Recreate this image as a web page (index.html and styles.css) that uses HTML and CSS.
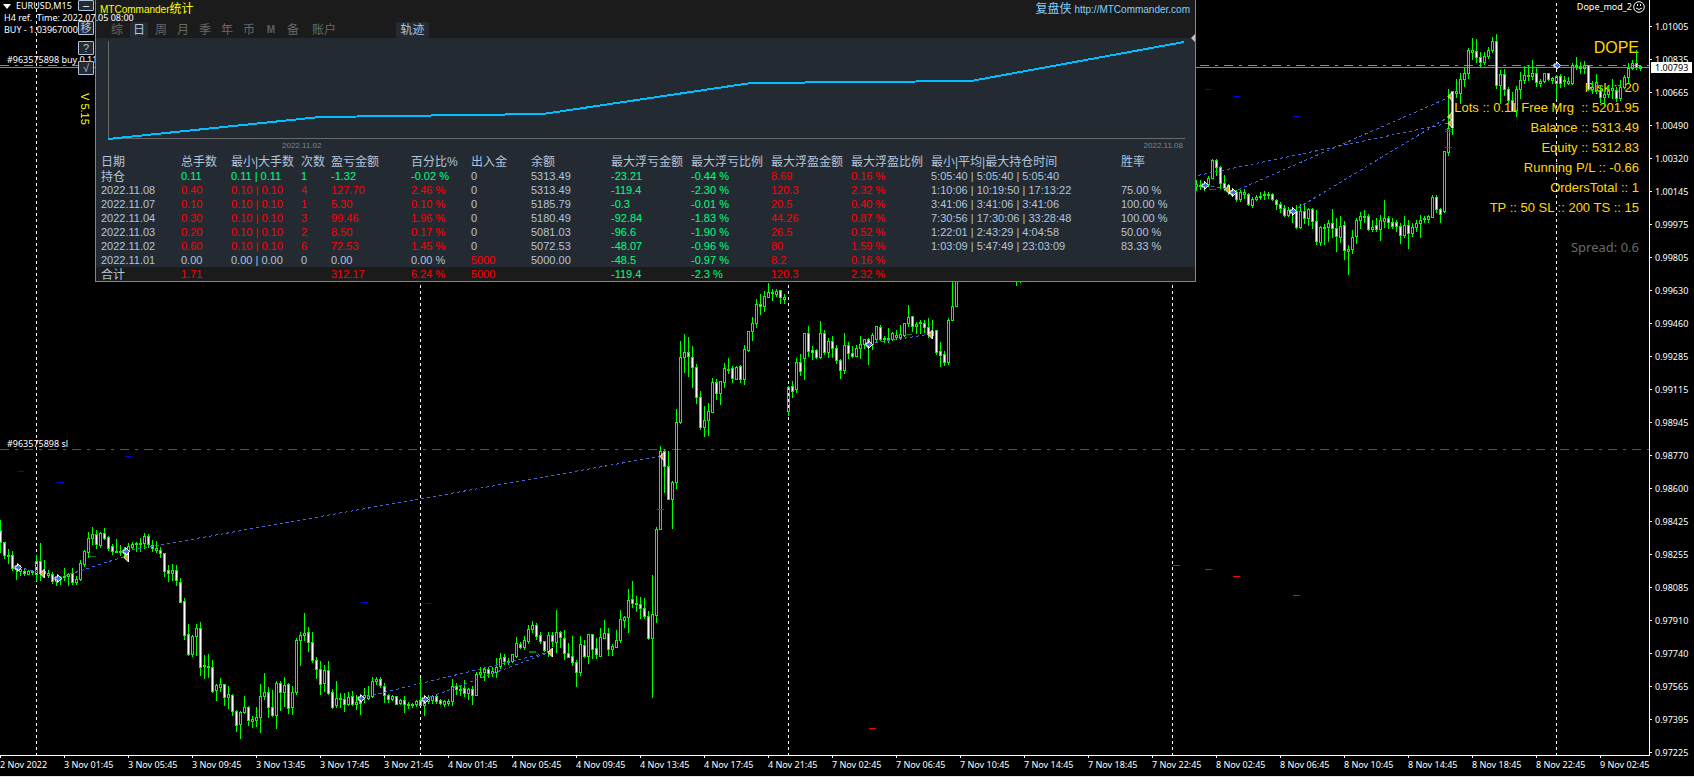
FILE: index.html
```html
<!DOCTYPE html>
<html lang="zh-CN">
<head>
<meta charset="utf-8">
<title>EURUSD,M15</title>
<link rel="stylesheet" href="styles.css">
</head>
<body>
<main class="terminal">
  <section class="plot">
    <div class="hud">
      <p class="expert">Dope_mod_2
        <svg class="smiley" width="12" height="12" viewBox="0 0 12 12" fill="none" stroke="#fff"><circle cx="6" cy="6" r="5.300"/><path d="M3 7q3 3 6 0M4.500 3v2M7.500 3v2"/></svg>
      </p>
      <h1 class="hud-title">DOPE</h1>
      <ul class="hud-list">
        <li>Risk :: 20</li>
        <li>Lots :: 0.11 Free Mrg &nbsp;:: 5201.95</li>
        <li>Balance :: 5313.49</li>
        <li>Equity :: 5312.83</li>
        <li>Running P/L :: -0.66</li>
        <li>OrdersTotal :: 1</li>
        <li>TP :: 50 SL :: 200 TS :: 15</li>
      </ul>
      <p class="spread">Spread: 0.6</p>
    </div>

    <svg class="chart" id="chart" shape-rendering="crispEdges">
      <g id="separators" stroke="#fff" stroke-dasharray="3 3"></g>
      <line x1="0" x2="100%" y1="65.500" y2="65.500" stroke="#32cd32" stroke-dasharray="9 6 3 6"/>
      <line x1="0" x2="100%" y1="449.500" y2="449.500" stroke="#f01010" stroke-dasharray="9 6 3 6"/>
      <line x1="0" x2="100%" y1="67.500" y2="67.500" stroke="#778899"/>
      <path id="bars" fill="#00ff00" fill-rule="evenodd"/>
      <path id="solid" fill="#fff"/>
      <g id="levels"></g>
      <g id="trades" stroke="#4169e1" stroke-dasharray="3 3"></g>
      <g id="markers" shape-rendering="auto"></g>
    </svg>

    <p class="order order-open">#963575898 buy 0.11</p>
    <p class="order order-stop">#963575898 sl</p>

    <div class="tools">
      <button class="tool tool-min" type="button" aria-label="最小化">–</button>
      <button class="tool" type="button">移</button>
      <button class="tool" type="button">?</button>
      <button class="tool" type="button">√</button>
      <span class="version">V 5.15</span>
    </div>

    <section class="panel">
      <header class="panel-head">
        <div class="title-row">
          <h2 class="title">MTCommander<span class="cjk">统计</span></h2>
          <a class="site" href="http://MTCommander.com"><span class="cjk">复盘侠</span> http://MTCommander.com</a>
        </div>
        <nav class="tabs">
          <button class="tab" type="button">综</button>
          <button class="tab active" type="button">日</button>
          <button class="tab" type="button">周</button>
          <button class="tab" type="button">月</button>
          <button class="tab" type="button">季</button>
          <button class="tab" type="button">年</button>
          <button class="tab" type="button">币</button>
          <button class="tab tab-m" type="button">M</button>
          <button class="tab" type="button">备</button>
          <button class="tab tab-wide" type="button">账户</button>
          <button class="tab tab-track active" type="button">轨迹</button>
        </nav>
      </header>
      <svg class="equity" viewBox="0 0 1077 102" preserveAspectRatio="none" fill="none">
        <path d="M.5 3V100.500H1077" stroke="#696969" vector-effect="non-scaling-stroke" shape-rendering="crispEdges"/>
        <path d="M0 101L212 79L435 76L643 45L863 43L1076 4" stroke="#00bfff" stroke-width="2" vector-effect="non-scaling-stroke" shape-rendering="crispEdges"/>
      </svg>
      <div class="dates"><span>2022.11.02</span><span>2022.11.08</span></div>
      <table class="stats">
        <colgroup>
          <col class="c80"><col class="c50"><col class="c70"><col class="c30"><col class="c80"><col class="c60"><col class="c60"><col class="c80"><col class="c80"><col class="c80"><col class="c80"><col class="c80"><col class="c190"><col>
        </colgroup>
        <thead>
          <tr><th>日期</th><th>总手数</th><th>最小|大手数</th><th>次数</th><th>盈亏金额</th><th>百分比%</th><th>出入金</th><th>余额</th><th>最大浮亏金额</th><th>最大浮亏比例</th><th>最大浮盈金额</th><th>最大浮盈比例</th><th>最小|平均|最大持仓时间</th><th>胜率</th></tr>
        </thead>
        <tbody>
          <tr class="g"><td class="n cjk">持仓</td><td>0.11</td><td>0.11 | 0.11</td><td>1</td><td>-1.32</td><td>-0.02 %</td><td class="n">0</td><td class="n">5313.49</td><td>-23.21</td><td>-0.44 %</td><td class="r">8.69</td><td class="r">0.16 %</td><td class="n">5:05:40 | 5:05:40 | 5:05:40</td><td></td></tr>
          <tr class="r"><td class="n">2022.11.08</td><td>0.40</td><td>0.10 | 0.10</td><td>4</td><td>127.70</td><td>2.46 %</td><td class="n">0</td><td class="n">5313.49</td><td class="g">-119.4</td><td class="g">-2.30 %</td><td>120.3</td><td>2.32 %</td><td class="n">1:10:06 | 10:19:50 | 17:13:22</td><td class="n">75.00 %</td></tr>
          <tr class="r"><td class="n">2022.11.07</td><td>0.10</td><td>0.10 | 0.10</td><td>1</td><td>5.30</td><td>0.10 %</td><td class="n">0</td><td class="n">5185.79</td><td class="g">-0.3</td><td class="g">-0.01 %</td><td>20.5</td><td>0.40 %</td><td class="n">3:41:06 | 3:41:06 | 3:41:06</td><td class="n">100.00 %</td></tr>
          <tr class="r"><td class="n">2022.11.04</td><td>0.30</td><td>0.10 | 0.10</td><td>3</td><td>99.46</td><td>1.96 %</td><td class="n">0</td><td class="n">5180.49</td><td class="g">-92.84</td><td class="g">-1.83 %</td><td>44.26</td><td>0.87 %</td><td class="n">7:30:56 | 17:30:06 | 33:28:48</td><td class="n">100.00 %</td></tr>
          <tr class="r"><td class="n">2022.11.03</td><td>0.20</td><td>0.10 | 0.10</td><td>2</td><td>8.50</td><td>0.17 %</td><td class="n">0</td><td class="n">5081.03</td><td class="g">-96.6</td><td class="g">-1.90 %</td><td>26.5</td><td>0.52 %</td><td class="n">1:22:01 | 2:43:29 | 4:04:58</td><td class="n">50.00 %</td></tr>
          <tr class="r"><td class="n">2022.11.02</td><td>0.60</td><td>0.10 | 0.10</td><td>6</td><td>72.53</td><td>1.45 %</td><td class="n">0</td><td class="n">5072.53</td><td class="g">-48.07</td><td class="g">-0.96 %</td><td>80</td><td>1.59 %</td><td class="n">1:03:09 | 5:47:49 | 23:03:09</td><td class="n">83.33 %</td></tr>
          <tr class="n"><td>2022.11.01</td><td>0.00</td><td>0.00 | 0.00</td><td>0</td><td>0.00</td><td>0.00 %</td><td class="r">5000</td><td>5000.00</td><td class="g">-48.5</td><td class="g">-0.97 %</td><td class="r">8.2</td><td class="r">0.16 %</td><td></td><td></td></tr>
        </tbody>
        <tfoot>
          <tr class="r"><td class="n cjk">合计</td><td>1.71</td><td></td><td></td><td>312.17</td><td>6.24 %</td><td>5000</td><td></td><td class="g">-119.4</td><td class="g">-2.3 %</td><td>120.3</td><td>2.32 %</td><td></td><td></td></tr>
        </tfoot>
      </table>
      <svg class="grip" width="4" height="8" viewBox="0 0 4 8"><path d="M4 0V8L0 4Z" fill="#c0c0c0"/></svg>
    </section>

    <div class="symbol">
      <p class="pair"><svg width="8" height="5" viewBox="0 0 8 5"><path d="M0 0H8L4 5Z" fill="#fff"/></svg>EURUSD,M15</p>
      <p>H4 ref. &nbsp;Time: 2022.07.05 08:00</p>
      <p>BUY - 1.03967000</p>
    </div>
  </section>

  <aside class="prices">
    <ol class="price-list" id="prices"></ol>
    <strong class="bid">1.00793</strong>
  </aside>
  <footer class="times">
    <ol class="time-list" id="times"></ol>
  </footer>
</main>
<script src="chart.js"></script>
</body>
</html>
```

FILE: styles.css
```css
* { box-sizing: border-box; }
body, p, h1, h2, ul, ol { margin: 0; padding: 0; font-weight: 400; }
ul, ol { list-style: none; }
button { margin: 0; padding: 0; font: inherit; color: inherit; background: none; border: 0; }

body {
  background: #000;
  color: #fff;
  font-family: "Noto Sans", "Noto Sans CJK SC", sans-serif;
  font-size: 9px;
  line-height: 12px;
}
.cjk { font-family: "Noto Sans CJK SC", sans-serif; font-size: 12px; }

.terminal {
  display: grid;
  grid-template-columns: minmax(0, 1fr) 44px;
  grid-template-rows: minmax(0, 1fr) 21px;
  min-height: 100vh;
  border-bottom: 1px solid #e8e8e8;
}
.plot {
  position: relative;
  grid-area: 1 / 1;
  overflow: hidden;
  border-right: 1px solid #fff;
}
.chart { position: absolute; inset: 0; width: 100%; height: 100%; }

/* account read-out */
.hud {
  display: flex;
  flex-direction: column;
  align-items: flex-end;
  padding-right: 10px;
  font-family: "Liberation Sans", Arial, sans-serif;
  color: #ffd700;
}
.expert {
  display: flex;
  gap: 1px;
  align-items: center;
  height: 14px;
  margin-right: -6px;
  font-family: "Noto Sans", sans-serif;
  color: #fff;
}
.hud-title { margin: 24px 0 20px; font-size: 16px; line-height: 20px; }
.hud-list { text-align: right; font-size: 13px; line-height: 20px; }
.spread { margin-top: 19px; font-family: "Noto Sans", sans-serif; font-size: 13px; line-height: 20px; color: #696969; }

/* chart captions */
.symbol { position: absolute; top: 0; left: 4px; white-space: nowrap; }
.symbol p { height: 12px; }
.pair { display: flex; gap: 5px; align-items: center; margin-left: -1px; }
.order { position: absolute; left: 7px; white-space: nowrap; }
.order-open { top: 54px; }
.order-stop { top: 438px; }

.tools {
  position: absolute;
  top: 0;
  left: 78px;
  display: flex;
  flex-direction: column;
  gap: 6px;
  width: 16px;
}
.tool {
  height: 14px;
  border: 1px solid #b0c4de;
  border-radius: 1px;
  background: #242a32;
  color: #b0c4de;
  font-family: "Liberation Sans", "Noto Sans CJK SC", sans-serif;
  font-size: 11px;
  line-height: 12px;
}
.tool-min { height: 11px; margin-bottom: 4px; color: #fff; line-height: 7px; }
.version {
  margin-top: 12px;
  writing-mode: vertical-rl;
  line-height: 18px;
  font-size: 11px;
  font-family: "Liberation Sans", sans-serif;
  color: #ff0;
}

/* statistics window */
.panel {
  position: absolute;
  top: 0;
  left: 95px;
  right: 453px;
  overflow: hidden;
  border: 1px solid #778899;
  border-top: 0;
  background: #242a32;
  font-family: "Liberation Sans", Arial, "Noto Sans CJK SC", sans-serif;
  color: #b0c4de;
}
.panel-head { height: 38px; background: #1b1b1b; }
.title-row { display: flex; justify-content: space-between; padding: 0 5px 0 4px; line-height: 15px; }
.title { font-size: 10px; color: #ff0; }
.site { font-size: 10px; color: #87cefa; text-decoration: none; }
.tabs { display: flex; gap: 4px; padding: 5px 0 0 12px; font-size: 12px; color: #696969; }
.tab { width: 18px; height: 16px; border-radius: 2px; line-height: 16px; }
.tab-m { font-size: 10px; font-weight: 700; color: #4f6470; }
.tab-wide { width: 36px; }
.tab-track { width: 33px; margin-left: 50px; }
.tab.active { background: #242a32; color: #b0c4de; }

.equity { display: block; width: calc(100% - 22px); height: 102px; margin-left: 12px; }
.dates {
  display: flex;
  justify-content: space-between;
  height: 16px;
  padding: 0 12px 0 186px;
  font-size: 8px;
  line-height: 11px;
  color: #778899;
}
.stats { width: 100%; table-layout: fixed; border-collapse: collapse; font-size: 11px; line-height: 14px; }
.stats th, .stats td { height: 14px; padding: 0 0 0 5px; text-align: left; font-weight: 400; white-space: nowrap; }
.stats th { height: 13px; font-size: 12px; line-height: 13px; }
.stats td.cjk { font-size: 12px; }
.stats tfoot { background: #1b1b1b; }
.g { color: #00ff7f; }
.r { color: #f00; }
.n { color: #b0c4de; }
.c30 { width: 30px; }
.c50 { width: 50px; }
.c60 { width: 60px; }
.c70 { width: 70px; }
.c80 { width: 80px; }
.c190 { width: 190px; }
.grip { position: absolute; top: 34px; right: 0; }

/* axes */
.prices { position: relative; grid-area: 1 / 2 / 3 / 3; }
.price-list { padding-top: 10px; }
.price-list li { display: flex; gap: 3px; align-items: center; height: 33px; }
.price-list li::before { content: ""; width: 2px; height: 1px; background: #fff; }
.bid {
  position: absolute;
  top: 62px;
  left: 1px;
  width: 41px;
  padding-left: 4px;
  background: #fff;
  color: #000;
  font-weight: 400;
  line-height: 11px;
}
.times { grid-area: 2 / 1; }
.time-list { display: flex; border-top: 1px solid #fff; }
.time-list li { flex: 0 0 64px; white-space: nowrap; line-height: 13px; }
.time-list li::before { content: ""; display: block; width: 1px; height: 2px; background: #fff; }
```

FILE: chart.js
```js
const NS = "http://www.w3.org/2000/svg";
const STEP = 4;

// Runs of bars: index of the first bar, then "high,top,bottom,low" with w for a falling bar.
const runs = [
  [0, `520,530,542,552w 542,542,555,558w 549,555,556,563 551,555,568,570w 565,567,569,579w 565,569,571,575
  569,571,573,575w 570,571,574,574 570,571,572,574 555,561,574,580 543,561,573,580w 560,571,573,577w 570,573,575,577
  572,574,581,583w 577,579,581,585 576,577,579,584 568,576,577,580 573,574,576,585 568,573,582,584w 576,579,582,584
  560,563,579,580 550,551,564,566 532,538,552,557 527,534,538,544 530,534,544,548w 532,533,545,547 528,533,538,539w
  536,537,548,550w 544,546,551,554w 539,551,552,552 545,551,552,555 547,551,553,557 543,546,551,555 542,544,547,548
  542,543,544,551 538,543,544,551 533,536,543,548 534,536,544,547w 540,545,548,551w 541,548,550,552 547,550,553,557w
  553,553,571,576w 565,570,573,581w 564,570,573,580 565,570,580,585w 578,582,602,602w 598,601,635,639w 624,634,654,655w
  635,636,654,656 624,628,636,655 622,628,667,675w 655,665,666,678 654,666,667,677 660,667,691,692w 684,685,690,700
  678,684,687,691 684,684,697,705w 686,694,697,708 694,695,711,715w 710,711,725,731w 711,712,724,738 696,707,712,713
  706,707,720,725w 716,719,721,727 707,717,720,726 684,696,717,732 673,692,696,699 687,692,707,717w 690,707,715,716w
  681,683,715,728 681,683,692,710w 677,685,692,706 683,684,708,713w 686,692,707,714 638,640,692,694 632,635,640,665
  613,633,635,640 627,632,642,651w 632,642,660,662w 657,660,669,678w 661,669,684,694w 665,670,683,691 661,670,693,694w
  689,692,707,708w 681,698,705,707 693,698,699,707 693,699,704,711w 692,697,704,705 691,696,704,705w 695,702,704,709
  697,698,703,714 688,695,697,702 686,695,698,699 677,681,696,697 677,679,681,684 677,679,685,687w 683,686,695,702w
  694,695,699,702w 695,696,699,700 696,696,704,704w 699,700,703,704 696,700,704,712w 702,704,705,708 703,704,705,707
  700,701,704,706 678,700,705,705w 697,698,705,715 695,697,701,703 695,696,700,703 695,696,701,703w 699,700,703,704w
  700,701,704,706 699,701,703,705 679,686,701,705 683,686,689,694w 685,689,690,695 680,688,693,696w 688,689,693,699
  686,689,695,704w 672,674,695,695 667,672,674,677 668,669,672,680 667,669,673,677w 667,671,673,676 658,667,672,677
  653,658,666,668 654,657,661,664w 658,661,662,664 654,654,661,662 637,643,656,657 642,644,647,648w 636,640,647,649
  625,629,641,643 621,625,629,632 623,625,636,639w 632,635,641,643w 641,641,650,651w 632,635,651,656 632,635,641,646w
  610,632,642,652 631,632,637,647w 630,638,653,659w 643,653,657,657w 636,656,662,665w 660,662,672,686w 636,644,672,675
  640,645,656,657w 634,634,656,663 634,634,649,658w 638,648,654,658w 628,637,656,656 620,633,638,638 628,633,649,655w
  644,646,649,655 630,640,647,647 610,619,640,642 616,617,620,627 589,600,617,632 581,599,603,607w 596,603,604,611
  597,604,608,618w 598,608,616,618w 611,616,638,639w 575,614,638,697 527,529,615,622 446,451,529,529 449,451,466,492w
  451,466,499,499w 481,482,499,528 409,422,482,488 341,357,422,423 334,352,357,372 337,352,356,376w 346,357,367,387w
  364,367,397,403w 391,397,427,429w 406,420,427,436 403,411,420,435 378,382,412,412 379,382,393,399w 381,381,393,404
  363,368,382,387 358,369,370,373 366,368,378,382w 366,367,379,379 365,366,379,382w 345,349,379,384 331,331,350,351
  317,323,331,340 299,304,323,327 294,304,306,314w 291,296,306,311 283,292,297,297 289,292,293,300 289,291,294,296
  290,290,297,303w 294,297,299,303 386,387,411,415 381,386,391,397w 358,362,389,392 354,362,371,375w 333,333,358,379
  326,333,351,356w 346,350,352,359w 349,350,357,358w 321,333,357,358 330,333,352,354w 338,341,352,357 336,341,348,357w
  345,348,360,363w 359,360,370,378w 333,345,370,373 342,345,353,358w 346,353,356,357w 345,348,356,356 336,344,348,358
  339,339,344,348 338,339,347,364w 333,335,344,349 326,326,339,341 325,327,339,340w 336,338,339,342 328,338,339,342
  332,333,339,340 330,335,337,339 325,334,337,339 323,323,335,336 305,317,323,326 316,316,326,331w 322,324,326,333
  320,322,323,333 320,323,327,332w 318,327,334,337w 320,331,335,338 330,330,352,354w 342,351,355,366w 351,354,362,365w
  318,320,362,364 275,306,320,320 200,210,306,306`],
  [254, `270,270,276,285 270,270,276,282`],
  [299, `180,184,186,190 180,185,186,189 182,184,186,190 176,178,184,186 159,160,178,178 159,160,167,175w 166,167,183,188w
  175,183,188,190w 184,185,190,194w 188,190,195,196w 190,192,199,201w 190,192,199,201 189,192,194,198 193,194,204,205w
  197,199,205,207 195,197,199,200 192,196,197,199 191,194,195,199 192,194,195,198 193,194,199,200w 199,200,204,209w
  202,204,208,212w 205,208,215,216w 207,210,215,216 207,210,212,222 205,211,227,228w 204,211,227,228 204,211,218,223w
  208,209,218,225 208,209,221,228w 210,221,241,244w 226,227,242,245 224,227,228,244 220,223,227,241 209,223,228,237w
  218,228,236,251w 216,226,237,242 221,225,250,259w 245,249,251,274 230,237,249,253 218,220,236,243 212,216,220,228
  210,216,217,222 214,216,229,230w 220,227,229,231 218,225,229,231w 215,220,229,240 200,218,221,227 216,218,222,228w
  218,222,226,228w 220,222,226,231w 223,226,235,243w 216,225,235,237 220,225,233,248w 223,227,233,236 220,223,227,231
  215,220,223,237 216,218,219,222 215,216,219,222 195,197,217,217 195,197,209,212w 208,209,214,222w 151,151,211,212
  89,128,152,155 91,91,127,134w 79,91,93,97 73,79,93,103 68,73,79,86 48,50,73,78 38,50,52,59 39,51,57,62w 52,57,62,67w
  52,56,62,64 47,50,56,58 37,41,50,52 34,41,85,88w 70,74,85,103 69,74,89,95w 87,89,100,102w 92,100,111,111w
  86,89,110,116 72,80,89,98 66,75,80,83 66,75,76,80 60,73,76,79 67,73,82,86w 79,81,83,86 73,73,81,82 73,73,79,80w
  77,78,80,83 75,76,83,98 74,76,83,87w 76,80,81,86 77,81,83,84 63,65,83,84 57,65,66,69 62,66,68,73 61,65,68,73
  65,65,89,90w 81,87,89,93 74,82,90,93 85,90,97,102w 90,94,97,105 86,89,94,97 79,88,90,98 87,90,98,101w 80,87,98,100
  75,77,87,88 63,68,77,82 60,63,68,69 50,63,67,69w 65,66,68,70`]
];

const separators = [36, 420, 788, 1172, 1556];

const trades = [
  [18, 567, 42, 573], [58, 578, 126, 556], [126, 551, 662, 456], [361, 698, 550, 652], [425, 699, 550, 652],
  [869, 344, 930, 334], [1186, 178, 1450, 123], [1233, 192, 1450, 97], [1293, 211, 1450, 116], [1205, 185, 1227, 189]
];
const closes = [[42, 573], [126, 557], [550, 652], [662, 456], [930, 334], [1227, 189], [1450, 96], [1450, 116], [1450, 123]];
const opens = [[18, 567], [58, 578], [126, 551], [361, 698], [425, 699], [869, 344], [1205, 185], [1233, 192], [1293, 211], [1557, 65]];

const levels = {
  "#0000ff": [[17, 471], [57, 482], [125, 456], [361, 602], [425, 603], [1205, 89], [1233, 96], [1293, 116]],
  "#008000": [[89, 556], [529, 651], [529, 652], [657, 509], [905, 334], [1209, 189], [1445, 129], [1445, 131], [1445, 147]],
  "#ff0000": [[1173, 565], [1205, 569], [1233, 576], [1293, 595], [869, 728]]
};

const prices = ["1.01005", "1.00835", "1.00665", "1.00490", "1.00320", "1.00145", "0.99975", "0.99805", "0.99630",
  "0.99460", "0.99285", "0.99115", "0.98945", "0.98770", "0.98600", "0.98425", "0.98255", "0.98085", "0.97910",
  "0.97740", "0.97565", "0.97395", "0.97225"];

const days = [
  ["3 Nov", ["01", "05", "09", "13", "17", "21"]],
  ["4 Nov", ["01", "05", "09", "13", "17", "21"]],
  ["7 Nov", ["02", "06", "10", "14", "18", "22"]],
  ["8 Nov", ["02", "06", "10", "14", "18", "22"]],
  ["9 Nov", ["02"]]
];

const byId = id => document.getElementById(id);

function add(parent, tag, attrs) {
  const el = document.createElementNS(NS, tag);
  for (const key in attrs) el.setAttribute(key, attrs[key]);
  parent.append(el);
}

function addItems(list, texts) {
  for (const text of texts) {
    const li = document.createElement("li");
    li.textContent = text;
    list.append(li);
  }
}

const box = (x, y, w, h) => h > 0 ? `M${x} ${y}h${w}v${h}h${-w}z` : "";

let bars = "", solid = "";
for (const [first, text] of runs) {
  text.trim().split(/\s+/).forEach((item, i) => {
    const falling = item.endsWith("w");
    const [high, top, bottom, low] = item.replace("w", "").split(",").map(Number);
    const x = (first + i) * STEP;
    const inner = box(x, top + 1, 1, bottom - top - 1);
    bars += box(x, high, 1, top - high) + box(x, bottom + 1, 1, low - bottom);
    bars += box(x - 1, top, 3, bottom - top + 1) + inner;
    if (falling) solid += inner;
  });
}
byId("bars").setAttribute("d", bars);
byId("solid").setAttribute("d", solid);

for (const x of separators) add(byId("separators"), "line", { x1: x + 0.5, x2: x + 0.5, y1: 3, y2: "100%" });
for (const [x1, y1, x2, y2] of trades) add(byId("trades"), "line", { x1, y1, x2, y2 });
for (const color in levels) {
  for (const [x, y] of levels[color]) add(byId("levels"), "rect", { x, y, width: 7, height: 1, fill: color });
}
for (const [x, y] of closes) {
  const tip = `${x - 2} ${y + 0.5}`;
  add(byId("markers"), "path", { d: `M${tip}l4.500 -4.500v9z`, fill: "#daa520", stroke: "#fff" });
}
for (const [x, y] of opens) {
  add(byId("markers"), "path", { d: `M${x - 3} ${y - 1}h2.500v-2.500l4 4l-4 4v-2.500h-2.500z`, fill: "#4169e1", stroke: "#fff" });
}

addItems(byId("prices"), prices);
addItems(byId("times"), ["2 Nov 2022", ...days.flatMap(([day, hours]) => hours.map(h => `${day} ${h}:45`))]);
```
